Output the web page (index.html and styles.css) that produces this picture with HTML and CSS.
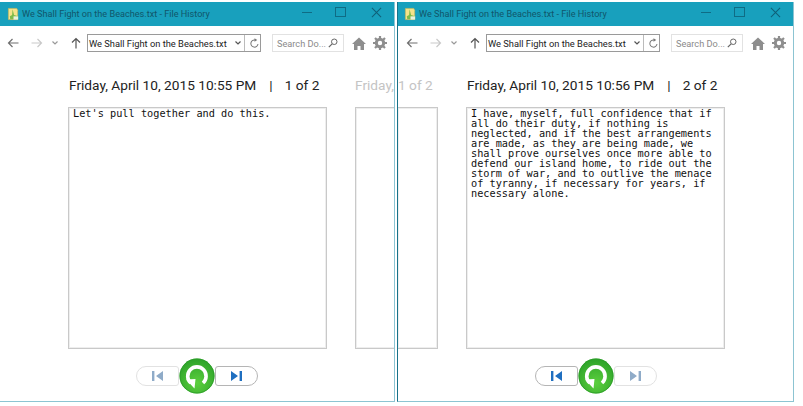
FILE: index.html
```html
<!DOCTYPE html>
<html lang="en">
<head>
<meta charset="utf-8">
<title>File History</title>
<link rel="stylesheet" href="styles.css">
</head>
<body>
<svg class="defs" width="0" height="0" aria-hidden="true">
  <defs>
    <radialGradient id="green" cx="50%" cy="70%" r="65%">
      <stop offset="0" stop-color="#5ccf3e"/>
      <stop offset="1" stop-color="#2fa52a"/>
    </radialGradient>
    <symbol id="app" viewBox="0 0 14 14">
      <path d="M1.500 1h9l1 2v10h-10z" fill="#f4e38a" stroke="#c9b65a" stroke-width=".7"/>
      <path d="M6 2l1.600 6 4.400 1.500-1.500 3H3.500L3 9.500 5.500 8z" fill="#7dbb4a"/>
      <path d="M7 9.500h5v3.500H7z" fill="#e9f2dc"/>
    </symbol>
    <symbol id="back" viewBox="0 0 12 10"><path d="M11.500 5H1.500M5.500 1L1.500 5l4 4" fill="none" stroke="currentColor" stroke-width="1.200"/></symbol>
    <symbol id="forward" viewBox="0 0 12 10"><path d="M.5 5h10M6.500 1l4 4-4 4" fill="none" stroke="currentColor" stroke-width="1.200"/></symbol>
    <symbol id="down" viewBox="0 0 8 6"><path d="M1.500 1.500L4 4l2.500-2.500" fill="none" stroke="currentColor" stroke-width="1.200"/></symbol>
    <symbol id="up" viewBox="0 0 10 12"><path d="M5 11.500V1.500M1 5.500l4-4 4 4" fill="none" stroke="currentColor" stroke-width="1.200"/></symbol>
    <symbol id="refresh" viewBox="0 0 12 12"><path d="M9.800 6.500A3.900 3.900 0 1 1 6.500 2.200" fill="none" stroke="currentColor" stroke-width="1.100"/><path d="M6 .2l3 2-3 2z" fill="currentColor"/></symbol>
    <symbol id="search" viewBox="0 0 12 12"><circle cx="7.500" cy="4.500" r="3.300" fill="none" stroke="currentColor" stroke-width="1.200"/><path d="M5 7l-4 4" stroke="currentColor" stroke-width="1.500"/></symbol>
    <symbol id="home" viewBox="0 0 14 13"><path d="M7 .5L14 7h-2v6H8.500V9h-3v4H2V7H0z" fill="currentColor"/></symbol>
    <symbol id="gear" viewBox="0 0 14 14"><circle cx="7" cy="7" r="3.700" fill="none" stroke="currentColor" stroke-width="3"/><path d="M7 0v3M7 11v3M0 7h3M11 7h3M2 2l2 2M10 10l2 2M12 2l-2 2M4 10l-2 2" stroke="currentColor" stroke-width="2.200"/></symbol>
    <symbol id="restore" viewBox="0 0 36 36">
      <circle cx="18" cy="18" r="17.500" fill="url(#green)"/>
      <circle cx="18" cy="18" r="17" fill="none" stroke="#2b9a28" stroke-width=".8"/>
      <path d="M11.800 25A9.200 9.200 0 1 1 24 25" fill="none" stroke="#fff" stroke-width="3.600"/>
      <path d="M7 21.500l9.500-.5-1 9.500z" fill="#fff"/>
    </symbol>
    <symbol id="first" viewBox="0 0 13 12"><path d="M1 1h2.400v10H1zM12 1v10L5 6z" fill="currentColor"/></symbol>
    <symbol id="last" viewBox="0 0 13 12"><path d="M12 1H9.600v10H12zM1 1v10l7-5z" fill="currentColor"/></symbol>
  </defs>
</svg>
<main class="desktop">
  <section class="window window-left">
    <header class="titlebar">
      <svg class="app-icon"><use href="#app"/></svg>
      <span class="title">We Shall Fight on the Beaches.txt - File History</span>
      <span class="caps">
        <span class="cap-min"></span>
        <span class="cap-max"></span>
        <svg class="cap-close" viewBox="0 0 12 12"><path d="M1 1l10 10M11 1L1 11" stroke="currentColor" stroke-width="1.100"/></svg>
      </span>
    </header>
    <nav class="toolbar">
      <svg class="ico-back"><use href="#back"/></svg>
      <svg class="ico-forward"><use href="#forward"/></svg>
      <svg class="ico-down"><use href="#down"/></svg>
      <svg class="ico-up"><use href="#up"/></svg>
      <div class="address">
        <span class="address-text">We Shall Fight on the Beaches.txt</span>
        <svg class="ico-combo"><use href="#down"/></svg>
        <span class="refresh"><svg class="ico-refresh"><use href="#refresh"/></svg></span>
      </div>
      <div class="searchbox"><span class="search-text">Search Do...</span><svg class="ico-search"><use href="#search"/></svg></div>
      <svg class="ico-home"><use href="#home"/></svg>
      <svg class="ico-gear"><use href="#gear"/></svg>
    </nav>
    <div class="stage stage-left">
      <article class="version">
        <h2 class="stamp">Friday, April 10, 2015 10:55 PM<span class="sep">|</span>1 of 2</h2>
        <pre class="pane">Let's pull together and do this.</pre>
      </article>
      <aside class="peek peek-next">
        <h2 class="stamp stamp-peek">Friday,</h2>
        <div class="pane pane-next"></div>
      </aside>
    </div>
    <footer class="controls">
      <div class="pill">
        <span class="pill-side"><svg class="step step-off"><use href="#first"/></svg></span>
        <svg class="restore"><use href="#restore"/></svg>
        <span class="pill-side pill-on"><svg class="step step-on"><use href="#last"/></svg></span>
      </div>
    </footer>
  </section>
  <section class="window window-right">
    <header class="titlebar">
      <svg class="app-icon"><use href="#app"/></svg>
      <span class="title">We Shall Fight on the Beaches.txt - File History</span>
      <span class="caps">
        <span class="cap-min"></span>
        <span class="cap-max"></span>
        <svg class="cap-close" viewBox="0 0 12 12"><path d="M1 1l10 10M11 1L1 11" stroke="currentColor" stroke-width="1.100"/></svg>
      </span>
    </header>
    <nav class="toolbar">
      <svg class="ico-back"><use href="#back"/></svg>
      <svg class="ico-forward"><use href="#forward"/></svg>
      <svg class="ico-down"><use href="#down"/></svg>
      <svg class="ico-up"><use href="#up"/></svg>
      <div class="address">
        <span class="address-text">We Shall Fight on the Beaches.txt</span>
        <svg class="ico-combo"><use href="#down"/></svg>
        <span class="refresh"><svg class="ico-refresh"><use href="#refresh"/></svg></span>
      </div>
      <div class="searchbox"><span class="search-text">Search Do...</span><svg class="ico-search"><use href="#search"/></svg></div>
      <svg class="ico-home"><use href="#home"/></svg>
      <svg class="ico-gear"><use href="#gear"/></svg>
    </nav>
    <div class="stage stage-right">
      <aside class="peek peek-prev">
        <h2 class="stamp stamp-peek">1 of 2</h2>
        <div class="pane pane-prev"></div>
      </aside>
      <article class="version">
        <h2 class="stamp">Friday, April 10, 2015 10:56 PM<span class="sep">|</span>2 of 2</h2>
        <pre class="pane">I have, myself, full confidence that if
all do their duty, if nothing is
neglected, and if the best arrangements
are made, as they are being made, we
shall prove ourselves once more able to
defend our island home, to ride out the
storm of war, and to outlive the menace
of tyranny, if necessary for years, if
necessary alone.</pre>
      </article>
    </div>
    <footer class="controls">
      <div class="pill">
        <span class="pill-side pill-on"><svg class="step step-on"><use href="#first"/></svg></span>
        <svg class="restore"><use href="#restore"/></svg>
        <span class="pill-side"><svg class="step step-off"><use href="#last"/></svg></span>
      </div>
    </footer>
  </section>
</main>
</body>
</html>
```

FILE: styles.css
```css
* { box-sizing: border-box; }
html, body { margin: 0; padding: 0; background: #fff; }
body { width: 803px; height: 406px; overflow: hidden; font-family: Roboto, "Noto Sans", sans-serif; color: #222; }
.defs { position: absolute; }
.desktop { display: flex; gap: 2px; padding-top: 2px; height: 402px; }
.window { display: flex; flex-direction: column; height: 400px; background: #fff; border-bottom: 1px solid #8cc4d2; overflow: hidden; }
.window-left { width: 395px; border-right: 1px solid #8cc4d2; }
.window-right { width: 397px; border-left: 1px solid #17728a; border-right: 1px solid #8cc4d2; }

.titlebar { display: flex; align-items: center; height: 24px; flex: none; background: #18a0bd; padding-left: 7px; }
.window-right .titlebar { padding-left: 6px; }
.app-icon { width: 13px; height: 14px; flex: none; }
.title { margin-left: 2px; font-size: 9.150px; color: #11566a; white-space: nowrap; }
.caps { display: flex; align-items: center; margin-left: auto; height: 100%; padding-right: 12px; padding-bottom: 4px; }
.cap-min { width: 10px; height: 1px; background: #0f6c85; margin-right: 23px; }
.cap-max { width: 11px; height: 10px; border: 1px solid #0f6c85; margin-right: 25px; }
.cap-close { width: 11px; height: 11px; color: #0f5f77; }

.toolbar { display: flex; align-items: center; height: 34px; flex: none; padding-left: 7px; color: #666; }
.window-right .toolbar { padding-left: 8px; }
.ico-back { width: 12px; height: 10px; color: #6f6f6f; }
.ico-forward { width: 12px; height: 10px; margin-left: 12px; color: #c9c9c9; }
.ico-down { width: 8px; height: 6px; margin-left: 8px; color: #999; }
.ico-up { width: 10px; height: 12px; margin-left: 12px; color: #555; }
.address { display: flex; align-items: center; width: 174px; height: 18px; margin-left: 6px; border: 1px solid #9a9a9a; }
.address-text { width: 141px; flex: none; overflow: hidden; white-space: nowrap; font-size: 9.300px; color: #222; padding-left: 3px; text-indent: -2px; }
.ico-combo { width: 8px; height: 6px; margin-left: 5px; color: #555; flex: none; }
.refresh { display: flex; align-items: center; justify-content: center; margin-left: 2px; width: 19px; height: 100%; border-left: 1px solid #bbb; flex: none; }
.ico-refresh { width: 11px; height: 11px; color: #777; }
.searchbox { display: flex; align-items: center; width: 72px; height: 18px; margin-left: 11px; padding-left: 4px; border: 1px solid #e2e2e2; }
.search-text { width: 48px; flex: none; font-size: 9.200px; color: #8a8a8a; white-space: nowrap; }
.ico-search { width: 10px; height: 10px; margin-left: 3px; color: #666; flex: none; }
.ico-home { width: 14px; height: 13px; margin-left: 8px; color: #8e8e8e; }
.ico-gear { width: 14px; height: 14px; margin-left: 7px; color: #8e8e8e; }

.stage { display: flex; flex: none; gap: 28px; padding-top: 14px; }
.stage-left { padding-left: 68px; }
.version { display: flex; flex-direction: column; width: 259px; flex: none; }
.stamp { margin: 0 0 11px; height: 22px; font-size: 13.700px; line-height: 22px; font-weight: 400; white-space: nowrap; color: #222; }
.version .stamp { margin-left: 1px; }
.sep { margin: 0 12px 0 13px; }
.pane { margin: 0; height: 242px; border: 1px solid #c9c9c9; box-shadow: inset 0 0 0 1px #eee; padding: 0 0 0 4px; font-family: "DejaVu Sans Mono", "Liberation Mono", monospace; font-size: 10.250px; line-height: 10px; color: #111; white-space: pre; overflow: hidden; }
.peek { display: flex; flex-direction: column; }
.peek-next { flex: 1; min-width: 0; margin-right: -1px; }
.peek-prev { width: 40px; flex: none; }
.stamp-peek { color: #c4c4c4; }
.peek-prev .stamp-peek { text-align: right; padding-right: 7px; }
.pane-next { border-right: 0; }
.pane-prev { border-left: 0; }

.controls { display: flex; justify-content: center; flex: none; margin-top: 9px; }
.pill { display: flex; align-items: center; height: 36px; }
.pill-side { display: flex; align-items: center; justify-content: center; width: 43px; height: 20px; border: 1px solid #e2e2e2; }
.pill-on { border-color: #b5b5b5; }
.restore { width: 36px; height: 36px; flex: none; }
.step { width: 13px; height: 12px; }
.step-on { color: #1f6fc0; }
.step-off { color: #8fabc8; }
.pill-side:first-child { border-radius: 10px 3px 3px 10px; }
.pill-side:last-child { border-radius: 3px 10px 10px 3px; }
```
